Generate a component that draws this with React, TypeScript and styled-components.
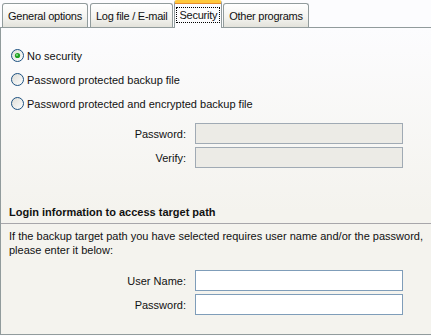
import styled, { createGlobalStyle, css } from 'styled-components';

const GlobalStyle = createGlobalStyle`
  html, body {
    margin: 0;
    padding: 0;
    background: #fcfcfe;
  }
  body {
    font-family: Tahoma, "Liberation Sans", Arial, sans-serif;
    font-size: 11px;
    color: #111;
  }
`;

const tabs = ['General options', 'Log file / E-mail', 'Security', 'Other programs'];
const ACTIVE = 2;

function Radio({ checked, label }: { checked?: boolean; label: string }) {
  return (
    <RadioRow>
      <svg width="13" height="13" viewBox="0 0 13 13">
        <defs>
          <linearGradient id="rg" x1="0" y1="0" x2="1" y2="1">
            <stop offset="0" stopColor="#dcdcd6" />
            <stop offset="1" stopColor="#ffffff" />
          </linearGradient>
        </defs>
        <circle cx="6.5" cy="6.5" r="6" fill="url(#rg)" stroke="#1c5180" strokeWidth="1" />
        {checked && (
          <>
            <circle cx="6.5" cy="6.5" r="2.6" fill="#21a121" />
            <circle cx="6" cy="6" r="1" fill="#8fdc8f" />
          </>
        )}
      </svg>
      <span>{label}</span>
    </RadioRow>
  );
}

export default function App() {
  return (
    <>
      <GlobalStyle />
      <Root>
        <TabStrip>
          {tabs.map((t, i) => (
            <Tab key={t} $active={i === ACTIVE}>
              <TabLabel $active={i === ACTIVE}>{t}</TabLabel>
            </Tab>
          ))}
        </TabStrip>
        <Panel>
          <Options>
            <Radio checked label="No security" />
            <Radio label="Password protected backup file" />
            <Radio label="Password protected and encrypted backup file" />
          </Options>
          <FieldGrid $top={13}>
            <FieldLabel>Password:</FieldLabel>
            <Field $disabled />
            <FieldLabel>Verify:</FieldLabel>
            <Field $disabled />
          </FieldGrid>
          <SectionTitle>Login information to access target path</SectionTitle>
          <Note>
            If the backup target path you have selected requires user name and/or the password,
            <br />
            please enter it below:
          </Note>
          <FieldGrid $top={13}>
            <FieldLabel>User Name:</FieldLabel>
            <Field />
            <FieldLabel>Password:</FieldLabel>
            <Field />
          </FieldGrid>
        </Panel>
      </Root>
    </>
  );
}

const Root = styled.div`
  width: 431px;
  height: 336px;
  overflow: hidden;
  background: #fcfcfe;
`;

const TabStrip = styled.div`
  display: flex;
  align-items: flex-end;
  height: 27px;
  padding-left: 2px;
  gap: 2px;
`;

const Tab = styled.div<{ $active?: boolean }>`
  position: relative;
  box-sizing: border-box;
  height: 24px;
  padding: 0 3px;
  display: flex;
  align-items: center;
  border: 1px solid #919b9c;
  border-bottom: none;
  border-radius: 3px 3px 0 0;
  background: linear-gradient(#ffffff, #f3f3ef 60%, #e3e2db);
  white-space: nowrap;
  letter-spacing: -0.25px;
  ${({ $active }) =>
    $active &&
    css`
      height: 28px;
      margin: 0 -1px -1px -1px;
      padding: 0 2px 1px;
      z-index: 1;
      background: #fcfcfe;
      border-top: 3px solid #ffc83c;
      box-shadow: inset 0 1px 0 #e68b2c;
    `}
`;

const TabLabel = styled.span<{ $active?: boolean }>`
  padding: 1px 2px;
  ${({ $active }) =>
    $active &&
    css`
      outline: 1px dotted #000;
      outline-offset: 0;
    `}
`;

const Panel = styled.div`
  box-sizing: border-box;
  width: 440px;
  height: 308px;
  border: 1px solid #919b9c;
  border-right: none;
  background: linear-gradient(#fcfcfe, #f4f3ee 60%, #f4f3ee);
  display: flex;
  flex-direction: column;
`;

const Options = styled.div`
  display: flex;
  flex-direction: column;
  gap: 11px;
  padding: 21px 0 0 10px;
`;

const RadioRow = styled.label`
  display: flex;
  align-items: center;
  gap: 3px;
  height: 13px;
  svg {
    flex: none;
  }
`;

const FieldGrid = styled.div<{ $top: number }>`
  display: grid;
  grid-template-columns: 185px 208px;
  column-gap: 9px;
  row-gap: 3px;
  align-items: center;
  margin-top: ${({ $top }) => $top}px;
`;

const FieldLabel = styled.span`
  text-align: right;
`;

const Field = styled.div<{ $disabled?: boolean }>`
  box-sizing: border-box;
  height: 21px;
  border: 1px solid #7f9db9;
  background: ${({ $disabled }) => ($disabled ? '#ecebe6' : '#ffffff')};
  ${({ $disabled }) => $disabled && 'border-color: #a0aab4;'}
`;

const SectionTitle = styled.div`
  margin-top: 37px;
  padding: 0 0 4px 8px;
  font-weight: bold;
  border-bottom: 1px solid #a7a6aa;
  line-height: 14px;
`;

const Note = styled.p`
  margin: 5px 0 0 8px;
  line-height: 14px;
`;
